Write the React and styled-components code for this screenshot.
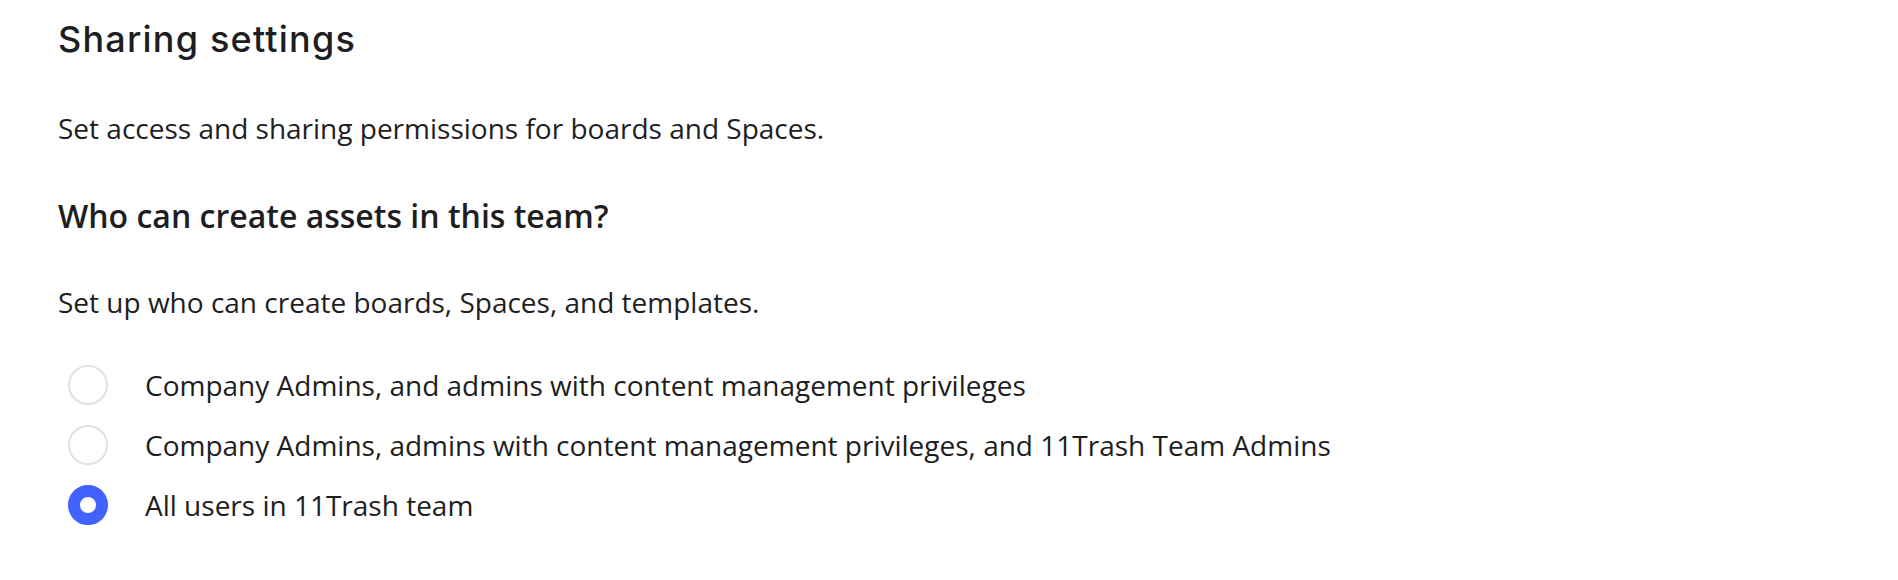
import React, { useState } from 'react';
import styled, { createGlobalStyle } from 'styled-components';

const GlobalStyle = createGlobalStyle`
    body {
        margin: 0;
        background: #ffffff;
        color: #1e1e22;
        font-family: "Open Sans", "Noto Sans", sans-serif;
    }
`

const Page = styled.div`
    padding: 17px 58px 0;
`

const Title = styled.h1`
    margin: 0;
    font-family: "Inter", "DejaVu Sans", sans-serif;
    font-size: 36px;
    line-height: 44px;
    font-weight: 500;
    letter-spacing: 1.2px;
`

const Text = styled.p`
    margin: ${props => props.top}px 0 0;
    font-size: 28px;
    line-height: 36px;
`

const Subtitle = styled.h2`
    margin: 50px 0 0;
    font-size: 32px;
    line-height: 40px;
    font-weight: 600;
`

const Options = styled.div`
    margin-top: 35px;
    display: flex;
    flex-direction: column;
`

const Option = styled.label`
    display: flex;
    align-items: center;
    height: 60px;
    padding-left: 10px;
    gap: 37px;
    font-size: 28px;
    cursor: pointer;
`

const Radio = styled.span`
    box-sizing: border-box;
    width: 40px;
    height: 40px;
    border-radius: 50%;
    flex-shrink: 0;
    border: ${props => props.checked ? '12px solid #4262ff' : '2px solid #e0e0e6'};
    background: #fff;
`

const options = [
    'Company Admins, and admins with content management privileges',
    'Company Admins, admins with content management privileges, and 11Trash Team Admins',
    'All users in 11Trash team',
]

const App = () => {
    const [selected, setSelected] = useState(2)
    return (
        <Page>
            <GlobalStyle />
            <Title>Sharing settings</Title>
            <Text top={49}>Set access and sharing permissions for boards and Spaces.</Text>
            <Subtitle>Who can create assets in this team?</Subtitle>
            <Text top={48}>Set up who can create boards, Spaces, and templates.</Text>
            <Options>
                {options.map((label, i) => (
                    <Option key={i} onClick={() => setSelected(i)}>
                        <Radio checked={selected === i} />
                        {label}
                    </Option>
                ))}
            </Options>
        </Page>
    )
}

export default App;
